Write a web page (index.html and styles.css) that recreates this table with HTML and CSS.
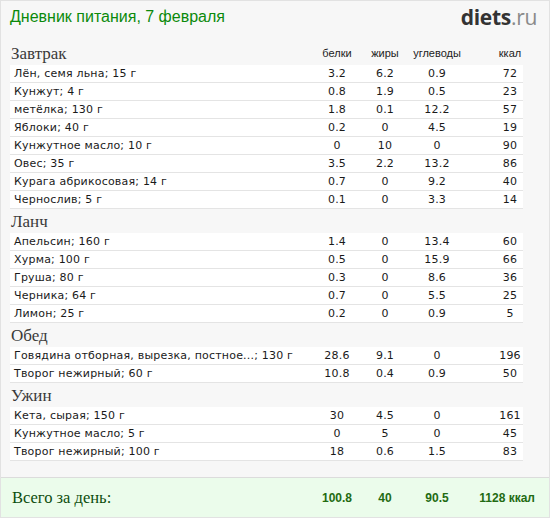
FILE: index.html
```html
<!DOCTYPE html>
<html lang="ru">
<head>
  <meta charset="UTF-8" />
  <meta name="viewport" content="width=device-width, initial-scale=1.0"/>
  <title>Дневник питания, 7 февраля</title>
  <link rel="stylesheet" href="styles.css">
</head>
<body>
  <div class="diary">
    <div class="top">
      <h1>Дневник питания, 7 февраля</h1>
      <div class="logo"><b>diets</b>.ru</div>
    </div>

    <div class="meals">
      <div class="meal-head">
        <h2>Завтрак</h2>
        <span>белки</span><span>жиры</span><span>углеводы</span><span class="kcal">ккал</span>
      </div>
      <div class="row"><span class="name">Лён, семя льна; 15 г</span><span>3.2</span><span>6.2</span><span>0.9</span><span class="kcal">72</span></div>
      <div class="row"><span class="name">Кунжут; 4 г</span><span>0.8</span><span>1.9</span><span>0.5</span><span class="kcal">23</span></div>
      <div class="row"><span class="name">метёлка; 130 г</span><span>1.8</span><span>0.1</span><span>12.2</span><span class="kcal">57</span></div>
      <div class="row"><span class="name">Яблоки; 40 г</span><span>0.2</span><span>0</span><span>4.5</span><span class="kcal">19</span></div>
      <div class="row"><span class="name">Кунжутное масло; 10 г</span><span>0</span><span>10</span><span>0</span><span class="kcal">90</span></div>
      <div class="row"><span class="name">Овес; 35 г</span><span>3.5</span><span>2.2</span><span>13.2</span><span class="kcal">86</span></div>
      <div class="row"><span class="name">Курага абрикосовая; 14 г</span><span>0.7</span><span>0</span><span>9.2</span><span class="kcal">40</span></div>
      <div class="row"><span class="name">Чернослив; 5 г</span><span>0.1</span><span>0</span><span>3.3</span><span class="kcal">14</span></div>

      <div class="meal-head"><h2>Ланч</h2></div>
      <div class="row"><span class="name">Апельсин; 160 г</span><span>1.4</span><span>0</span><span>13.4</span><span class="kcal">60</span></div>
      <div class="row"><span class="name">Хурма; 100 г</span><span>0.5</span><span>0</span><span>15.9</span><span class="kcal">66</span></div>
      <div class="row"><span class="name">Груша; 80 г</span><span>0.3</span><span>0</span><span>8.6</span><span class="kcal">36</span></div>
      <div class="row"><span class="name">Черника; 64 г</span><span>0.7</span><span>0</span><span>5.5</span><span class="kcal">25</span></div>
      <div class="row"><span class="name">Лимон; 25 г</span><span>0.2</span><span>0</span><span>0.9</span><span class="kcal">5</span></div>

      <div class="meal-head"><h2>Обед</h2></div>
      <div class="row"><span class="name">Говядина отборная, вырезка, постное...; 130 г</span><span>28.6</span><span>9.1</span><span>0</span><span class="kcal">196</span></div>
      <div class="row"><span class="name">Творог нежирный; 60 г</span><span>10.8</span><span>0.4</span><span>0.9</span><span class="kcal">50</span></div>

      <div class="meal-head"><h2>Ужин</h2></div>
      <div class="row"><span class="name">Кета, сырая; 150 г</span><span>30</span><span>4.5</span><span>0</span><span class="kcal">161</span></div>
      <div class="row"><span class="name">Кунжутное масло; 5 г</span><span>0</span><span>5</span><span>0</span><span class="kcal">45</span></div>
      <div class="row"><span class="name">Творог нежирный; 100 г</span><span>18</span><span>0.6</span><span>1.5</span><span class="kcal">83</span></div>
    </div>

    <div class="total">
      <span class="total-label">Всего за день:</span>
      <span>100.8</span><span>40</span><span>90.5</span><span class="kcal">1128 ккал</span>
    </div>
  </div>
</body>
</html>
```

FILE: styles.css
```css
body {
  margin: 0;
  font-family: 'Liberation Sans', Arial, sans-serif;
  color: #222;
}
.diary {
  width: 548px;
  height: 516px;
  border: 1px solid #e2e2e2;
  background: #f7f7f7;
}
.top {
  height: 40px;
  display: flex;
  justify-content: space-between;
  padding: 0 12px 0 9px;
}
h1 {
  margin: 7px 0 0;
  font-size: 16px;
  font-weight: normal;
  color: #0b8a0b;
}
.logo {
  margin-top: 2px;
  font-family: 'Open Sans', 'Liberation Sans', sans-serif;
  font-size: 21px;
  color: #8a8a8a;
  letter-spacing: -0.3px;
}
.logo b {
  color: #333;
}
.meals {
  padding: 0 26px 16px 9px;
}
.meal-head, .row, .total {
  display: grid;
  grid-template-columns: 1fr 48px 48px 56px 58px;
  align-items: center;
  text-align: center;
}
.meal-head {
  height: 24px;
  font-size: 11px;
}
.meal-head h2 {
  margin: 0;
  padding: 2px 0 0 1px;
  text-align: left;
  font-family: 'Liberation Serif', serif;
  font-size: 17px;
  font-weight: normal;
  color: #3a3a3a;
}
.row {
  height: 17px;
  background: #fff;
  border-bottom: 1px solid #e4e4e4;
  font-family: 'DejaVu Sans', Verdana, sans-serif;
  font-size: 11px;
  letter-spacing: 0.2px;
  color: #1a1a1a;
}
.row .name {
  text-align: left;
  padding-left: 4px;
  white-space: nowrap;
}
.kcal {
  padding-left: 32px;
}
.total {
  height: 39px;
  padding-left: 9px;
  padding-right: 26px;
  border-top: 1px solid #dcdcdc;
  background: #ebfceb;
  font-size: 12px;
  font-weight: bold;
  color: #236b12;
}
.total-label {
  text-align: left;
  padding-left: 2px;
  font-family: 'Liberation Serif', serif;
  font-size: 16.5px;
  font-weight: normal;
  color: #0d4d0d;
}
.total .kcal {
  padding-left: 0;
  white-space: nowrap;
  text-align: right;
  margin-right: -12px;
}
```
